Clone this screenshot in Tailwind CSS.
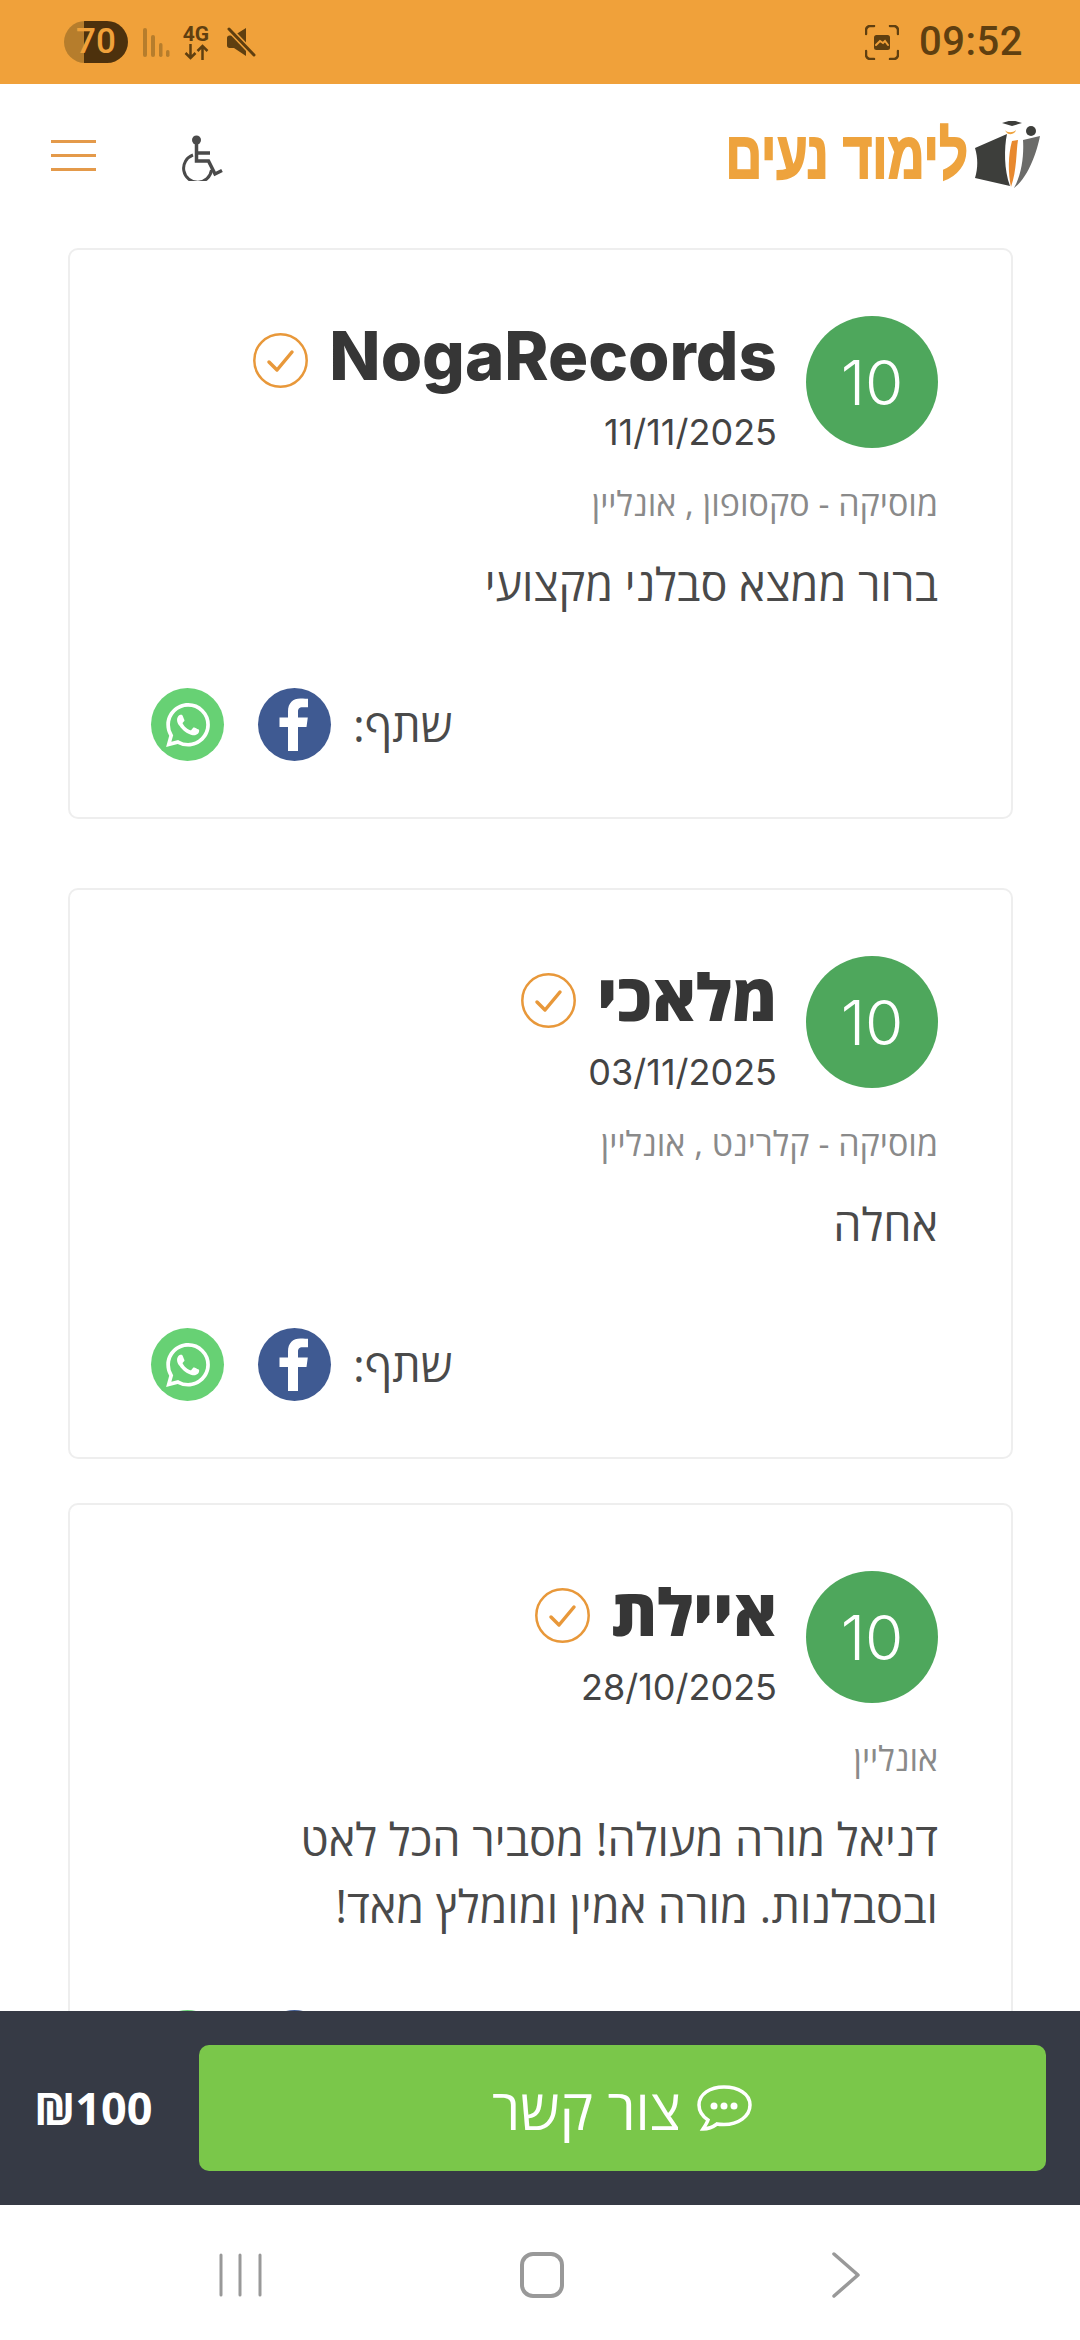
<!DOCTYPE html>
<html lang="he" dir="rtl">
<head>
    <meta charset="UTF-8">
    <meta name="viewport" content="width=device-width, initial-scale=1.0">
    <title>לימוד נעים</title>
    <script src="https://cdn.jsdelivr.net/npm/@tailwindcss/browser@4"></script>
</head>
<body class="bg-white font-['Open_Sans','Liberation_Sans',sans-serif]">
<svg class="hidden">
    <symbol id="wa" viewBox="0 0 24 24"><path fill="#fff" d="M17.472 14.382c-.297-.149-1.758-.867-2.03-.967-.273-.099-.471-.148-.67.15-.197.297-.767.966-.94 1.164-.173.199-.347.223-.644.075-.297-.15-1.255-.463-2.39-1.475-.883-.788-1.48-1.761-1.653-2.059-.173-.297-.018-.458.13-.606.134-.133.298-.347.446-.52.149-.174.198-.298.298-.497.099-.198.05-.371-.025-.52-.075-.149-.669-1.612-.916-2.207-.242-.579-.487-.5-.669-.51-.173-.008-.371-.01-.57-.01-.198 0-.52.074-.792.372-.272.297-1.04 1.016-1.04 2.479 0 1.462 1.065 2.875 1.213 3.074.149.198 2.096 3.2 5.077 4.487.709.306 1.262.489 1.694.625.712.227 1.36.195 1.871.118.571-.085 1.758-.719 2.006-1.413.248-.694.248-1.289.173-1.413-.074-.124-.272-.198-.57-.347m-5.421 7.403h-.004a9.87 9.87 0 01-5.031-1.378l-.361-.214-3.741.982.998-3.648-.235-.374a9.86 9.86 0 01-1.51-5.26c.001-5.45 4.436-9.884 9.888-9.884 2.64 0 5.122 1.03 6.988 2.898a9.825 9.825 0 012.893 6.994c-.003 5.45-4.437 9.884-9.885 9.884m8.413-18.297A11.815 11.815 0 0012.05 0C5.495 0 .16 5.335.157 11.892c0 2.096.547 4.142 1.588 5.945L.057 24l6.305-1.654a11.882 11.882 0 005.683 1.448h.005c6.554 0 11.89-5.335 11.893-11.893a11.821 11.821 0 00-3.48-8.413z"/></symbol>
    <symbol id="fb" viewBox="0 0 73 73"><path fill="#fff" d="M40 63V39h8.500l1.300-9.500H40v-5.600c0-2.800.8-4.600 4.800-4.600H50v-8.500c-.9-.1-4-.4-7.500-.4-7.500 0-12.500 4.500-12.500 12.900v6.200h-8.500V39H30v24z"/></symbol>
    <symbol id="check" viewBox="0 0 55 55"><circle cx="27.500" cy="27.500" r="26.200" fill="none" stroke="#e8983a" stroke-width="2.500"/><path d="M16 29l8 8 15-18" fill="none" stroke="#e8983a" stroke-width="3.500" stroke-linecap="round" stroke-linejoin="round"/></symbol>
</svg>

<div class="flex flex-col w-[1080px] h-[2340px] overflow-hidden">
    <!-- Status bar -->
    <div dir="ltr" class="flex items-center justify-between h-[84px] pl-[64px] pr-[57px] bg-[#f0a13a] text-[#5f3f10] shrink-0">
        <div class="flex items-center">
            <div class="flex items-center justify-center w-[64px] h-[42px] rounded-full bg-[linear-gradient(90deg,#b67d2c_31%,#4d310d_31%)] text-[#f0a13a] text-[35px] font-medium font-['Roboto',sans-serif]">70</div>
            <svg class="ml-[14px] w-[28px] h-[30px]" viewBox="0 0 28 30" fill="#b67d2c"><rect x="1" y="1" width="4" height="29" rx="2"/><rect x="9" y="8" width="4" height="22" rx="2"/><rect x="17" y="16" width="3.500" height="14" rx="1.700"/><rect x="24" y="23" width="3.500" height="7" rx="1.700"/></svg>
            <div class="ml-[13px] flex flex-col items-center w-[26px]">
                <span class="text-[21px] leading-[19px] font-bold font-['Roboto',sans-serif]">4G</span>
                <svg class="w-[25px] h-[16px]" viewBox="0 0 24 16" fill="none" stroke="#5f3f10" stroke-width="2.500"><path d="M6 0v14M1 9l5 5 5-5M18 16V2M13 7l5-5 5 5"/></svg>
            </div>
            <svg class="ml-[17px] w-[30px] h-[30px]" viewBox="0 0 30 30"><path fill="#5f3f10" d="M1 11c0-1.500 1-2.500 2.500-2.500H8L20 1v28L8 21H3.500C2 21 1 20 1 18.500z"/><path d="M3 2l25 26" stroke="#f0a13a" stroke-width="6"/><path d="M3 2l25 26" stroke="#5f3f10" stroke-width="3" stroke-linecap="round"/></svg>
        </div>
        <div class="flex items-center gap-[20px]">
            <svg class="w-[34px] h-[35px]" viewBox="0 0 34 35" fill="none" stroke="#5f3f10" stroke-width="2.500" stroke-linecap="round"><path d="M1 9V5c0-2 2-4 4-4h4M25 1h4c2 0 4 2 4 4v4M33 26v4c0 2-2 4-4 4h-4M9 34H5c-2 0-4-2-4-4v-4"/><rect x="9" y="10" width="16" height="15" rx="2.500" fill="#5f3f10" stroke="none"/><path d="M11 20l4-4 3 2 2-2 3 4" stroke="#f0a13a" stroke-width="2"/></svg>
            <span class="text-[40px] leading-none font-medium tracking-[0.5px] font-['Roboto',sans-serif]">09:52</span>
        </div>
    </div>

    <!-- Header -->
    <header dir="ltr" class="flex items-center h-[141px] pl-[51px] pr-[38px] shrink-0">
        <div class="flex flex-col justify-between mt-[2px] w-[45px] h-[31px]">
            <span class="h-[3px] bg-[#e49a4a]"></span>
            <span class="h-[3px] bg-[#e49a4a]"></span>
            <span class="h-[3px] bg-[#e49a4a]"></span>
        </div>
        <svg class="ml-[86px] mt-[6px] w-[42px] h-[46px]" viewBox="0 0 42 46" fill="none" stroke="#4a4a4a"><circle cx="14.500" cy="5" r="4.500" fill="#4a4a4a" stroke="none"/><path d="M14.500 8v18h12l6.500 13 7-3.500M15 18h13" stroke-width="3.500"/><path d="M11 20a14 14 0 1 0 18.500 15" stroke-width="3"/></svg>
        <div class="ml-auto flex items-center gap-[6px]">
            <span dir="rtl" class="text-[#eea33d] text-[66px] leading-none font-bold [-webkit-text-stroke:2px_#eea33d] font-['Liberation_Sans',sans-serif] scale-x-[0.77] origin-right whitespace-nowrap">לימוד נעים</span>
            <svg class="w-[68px] h-[68px]" viewBox="0 0 68 68">
                <path fill="#3d3e3b" d="M1 27l32-14c-3 14-3 36 3 52L1 57c3-10 3-20 0-30z"/>
                <path fill="#e8892f" d="M38 20l6-1c-2 12-1 30-7 47-3-14-3-32 1-46z"/>
                <path fill="#eea33d" d="M31 9c2 3 8 3 11 0-1 5-9 6-11 0z"/>
                <path fill="#3d3e3b" d="M28 2l10-3 10 3-10 3z"/>
                <circle cx="57" cy="10" r="5" fill="#3d3e3b"/>
                <path fill="#6b6b69" d="M49 19l17-4c-3 16-12 42-26 52 8-14 10-34 9-48z"/>
            </svg>
        </div>
    </header>

    <!-- Reviews -->
    <main class="flex-1 min-h-0 overflow-hidden">
        <article class="ml-[68px] mr-[67px] mt-[23px] h-[571px] border-2 border-[#eeeeee] rounded-[10px] pt-[66px] pr-[73px] pl-[81px]">
            <div class="flex gap-[29px]">
                <div class="flex items-center justify-center w-[132px] h-[132px] rounded-full bg-[#4ea75c] text-white text-[62px] font-light font-['Inter',sans-serif] shrink-0">10</div>
                <div class="pt-[2px]">
                    <div class="flex items-center gap-[21px]">
                        <h2 class="text-[67px] leading-[76px] font-extrabold text-[#363636] font-['Inter','Open_Sans',sans-serif]">NogaRecords</h2>
                        <svg class="mt-[8px] w-[55px] h-[55px]"><use href="#check"/></svg>
                    </div>
                    <p class="mt-[16px] text-[36px] leading-[44px] text-[#444444] font-['Inter',sans-serif]">11/11/2025</p>
                </div>
            </div>
            <p class="mt-[28px] text-[34px] leading-[42px] text-[#8a8a8a]">מוסיקה - סקסופון , אונליין</p>
            <p class="mt-[26px] text-[45px] leading-[67px] text-[#4a4a4a]">ברור ממצא סבלני מקצועי</p>
            <div class="mt-[71px] flex items-center justify-end gap-[34px]">
                <span class="-ml-[12px] text-[45px] leading-[73px] text-[#4a4a4a]">שתף:</span>
                <span class="flex items-center justify-center w-[73px] h-[73px] rounded-full bg-[#3f5a92]"><svg class="w-[73px] h-[73px]"><use href="#fb"/></svg></span>
                <span class="flex items-center justify-center w-[73px] h-[73px] rounded-full bg-[#67d174]"><svg class="w-[44px] h-[44px]"><use href="#wa"/></svg></span>
            </div>
        </article>

        <article class="ml-[68px] mr-[67px] mt-[69px] h-[571px] border-2 border-[#eeeeee] rounded-[10px] pt-[66px] pr-[73px] pl-[81px]">
            <div class="flex gap-[29px]">
                <div class="flex items-center justify-center w-[132px] h-[132px] rounded-full bg-[#4ea75c] text-white text-[62px] font-light font-['Inter',sans-serif] shrink-0">10</div>
                <div class="pt-[2px]">
                    <div class="flex items-center gap-[21px]">
                        <h2 class="text-[65px] leading-[76px] font-extrabold text-[#363636]">מלאכי</h2>
                        <svg class="mt-[8px] w-[55px] h-[55px]"><use href="#check"/></svg>
                    </div>
                    <p class="mt-[16px] text-[36px] leading-[44px] text-[#444444] font-['Inter',sans-serif]">03/11/2025</p>
                </div>
            </div>
            <p class="mt-[28px] text-[34px] leading-[42px] text-[#8a8a8a]">מוסיקה - קלרינט , אונליין</p>
            <p class="mt-[26px] text-[45px] leading-[67px] text-[#4a4a4a]">אחלה</p>
            <div class="mt-[71px] flex items-center justify-end gap-[34px]">
                <span class="-ml-[12px] text-[45px] leading-[73px] text-[#4a4a4a]">שתף:</span>
                <span class="flex items-center justify-center w-[73px] h-[73px] rounded-full bg-[#3f5a92]"><svg class="w-[73px] h-[73px]"><use href="#fb"/></svg></span>
                <span class="flex items-center justify-center w-[73px] h-[73px] rounded-full bg-[#67d174]"><svg class="w-[44px] h-[44px]"><use href="#wa"/></svg></span>
            </div>
        </article>

        <article class="ml-[68px] mr-[67px] mt-[44px] h-[640px] border-2 border-[#eeeeee] rounded-[10px] pt-[66px] pr-[73px] pl-[81px]">
            <div class="flex gap-[29px]">
                <div class="flex items-center justify-center w-[132px] h-[132px] rounded-full bg-[#4ea75c] text-white text-[62px] font-light font-['Inter',sans-serif] shrink-0">10</div>
                <div class="pt-[2px]">
                    <div class="flex items-center gap-[21px]">
                        <h2 class="text-[65px] leading-[76px] font-extrabold text-[#363636]">איילת</h2>
                        <svg class="mt-[8px] w-[55px] h-[55px]"><use href="#check"/></svg>
                    </div>
                    <p class="mt-[16px] text-[36px] leading-[44px] text-[#444444] font-['Inter',sans-serif]">28/10/2025</p>
                </div>
            </div>
            <p class="mt-[28px] text-[34px] leading-[42px] text-[#8a8a8a]">אונליין</p>
            <p class="mt-[26px] text-[45px] leading-[67px] text-[#4a4a4a]">דניאל מורה מעולה! מסביר הכל לאט<br>ובסבלנות. מורה אמין ומומלץ מאד!</p>
            <div class="mt-[71px] flex items-center justify-end gap-[34px]">
                <span class="-ml-[12px] text-[45px] leading-[73px] text-[#4a4a4a]">שתף:</span>
                <span class="flex items-center justify-center w-[73px] h-[73px] rounded-full bg-[#3f5a92]"><svg class="w-[73px] h-[73px]"><use href="#fb"/></svg></span>
                <span class="flex items-center justify-center w-[73px] h-[73px] rounded-full bg-[#67d174]"><svg class="w-[44px] h-[44px]"><use href="#wa"/></svg></span>
            </div>
        </article>
    </main>

    <!-- Contact bar -->
    <div dir="ltr" class="flex items-center justify-between h-[194px] pl-[34px] pr-[34px] bg-[#363a45] shrink-0">
        <span class="text-white text-[45px] font-bold font-['Open_Sans',sans-serif]">₪100</span>
        <button class="flex items-center justify-center gap-[15px] w-[847px] h-[126px] rounded-[10px] bg-[#7ac74a] text-white">
            <span dir="rtl" class="text-[56px] leading-none">צור קשר</span>
            <svg class="w-[57px] h-[50px]" viewBox="0 0 57 48" fill="none" stroke="#fff" stroke-width="3.500"><path d="M28 3C14 3 3 10 3 21c0 6 3 11 9 15-1 3-3 6-5 9 5 0 10-2 14-5 2 .5 5 .5 7 .5 14 0 26-8 26-19.500S42 3 28 3z"/><circle cx="18" cy="22" r="3.500" fill="#fff" stroke="none"/><circle cx="28" cy="22" r="3.500" fill="#fff" stroke="none"/><circle cx="38" cy="22" r="3.500" fill="#fff" stroke="none"/></svg>
        </button>
    </div>

    <!-- Android nav -->
    <nav dir="ltr" class="flex items-center h-[135px] pl-[219px] pt-[5px] shrink-0">
        <svg class="w-[44px] h-[44px]" viewBox="0 0 44 44" stroke="#999999" stroke-width="3" stroke-linecap="round"><path d="M2 2v40M21 2v40M41 2v40"/></svg>
        <span class="ml-[257px] w-[44px] h-[46px] rounded-[13px] border-[4px] border-[#999999]"></span>
        <svg class="ml-[267px] w-[30px] h-[46px]" viewBox="0 0 30 46" fill="none" stroke="#999999" stroke-width="3.500" stroke-linecap="round" stroke-linejoin="round"><path d="M3 2l24 21L3 44"/></svg>
    </nav>
</div>
</body>
</html>
